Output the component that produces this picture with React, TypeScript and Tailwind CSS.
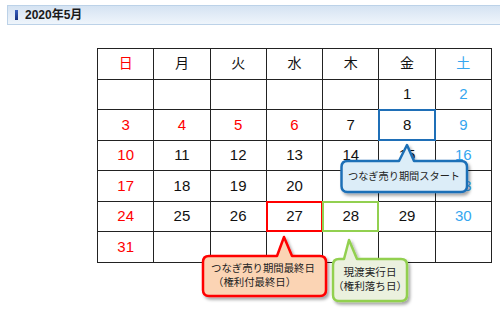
import React from 'react';

type Mark = 'blue' | 'red' | 'green';

const weeks: (number | null)[][] = [
  [null, null, null, null, null, 1, 2],
  [3, 4, 5, 6, 7, 8, 9],
  [10, 11, 12, 13, 14, 15, 16],
  [17, 18, 19, 20, 21, 22, 23],
  [24, 25, 26, 27, 28, 29, 30],
  [31, null, null, null, null, null, null],
];

const dayNames = ['日', '月', '火', '水', '木', '金', '土'];

// 祝日（GW）
const holidays = [4, 5, 6];

const marks: Record<number, Mark> = { 8: 'blue', 27: 'red', 28: 'green' };

const markClass: Record<Mark, string> = {
  blue: 'border-[#1f6fb7]',
  red: 'border-[#ff0000]',
  green: 'border-[#92d050]',
};

const dayColor = (col: number, day: number | null) => {
  if (col === 0 || (day !== null && holidays.includes(day))) return 'text-[#ff0000]';
  if (col === 6) return 'text-[#35a6ef]';
  return 'text-[#111]';
};

type Bubble = {
  x: number;
  y: number;
  w: number;
  h: number;
  baseL: number;
  baseR: number;
  tipX: number;
  tipY: number;
  stroke: string;
  fill: string;
};

const bubblePath = ({ x, y, w, h, baseL, baseR, tipX, tipY }: Bubble) => {
  const r = 6;
  const x2 = x + w;
  const y2 = y + h;
  return [
    `M${x + r},${y}`,
    `L${baseL},${y}`,
    `L${tipX},${tipY}`,
    `L${baseR},${y}`,
    `L${x2 - r},${y}`,
    `Q${x2},${y} ${x2},${y + r}`,
    `L${x2},${y2 - r}`,
    `Q${x2},${y2} ${x2 - r},${y2}`,
    `L${x + r},${y2}`,
    `Q${x},${y2} ${x},${y2 - r}`,
    `L${x},${y + r}`,
    `Q${x},${y} ${x + r},${y}`,
    'Z',
  ].join(' ');
};

const bubbles: Bubble[] = [
  { x: 341.5, y: 161, w: 125.5, h: 31, baseL: 399, baseR: 414, tipX: 407, tipY: 145, stroke: '#1f6fb7', fill: '#dcedf8' },
  { x: 203, y: 256, w: 123, h: 40, baseL: 277, baseR: 292, tipX: 284, tipY: 237, stroke: '#ff0000', fill: '#fbd4b4' },
  { x: 333, y: 259, w: 74, h: 42, baseL: 344, baseR: 357, tipX: 349, tipY: 240, stroke: '#92d050', fill: '#ebf1de' },
];

const Callouts = () => (
  <>
    <svg className="absolute inset-0 z-20 pointer-events-none" width={500} height={319}>
      <defs>
        <filter id="bubble-shadow" x="-20%" y="-20%" width="140%" height="140%">
          <feDropShadow dx="2" dy="2.5" stdDeviation="1.6" floodColor="#000" floodOpacity="0.35" />
        </filter>
      </defs>
      {bubbles.map((b, i) => (
        <path
          key={i}
          d={bubblePath(b)}
          fill={b.fill}
          stroke={b.stroke}
          strokeWidth={2.5}
          strokeLinejoin="round"
          filter="url(#bubble-shadow)"
        />
      ))}
    </svg>
    <div className="absolute z-30 left-[341px] top-[161px] w-[126px] h-[31px] flex items-center justify-center text-[10.2px] text-[#222] whitespace-nowrap">
      つなぎ売り期間スタート
    </div>
    <div className="absolute z-30 left-[211px] top-[262px] text-[10.4px] leading-[13.5px] text-[#222] whitespace-nowrap">
      <div>つなぎ売り期間最終日</div>
      <div className="pl-[2px]">（権利付最終日）</div>
    </div>
    <div className="absolute z-30 left-[333px] top-[265px] w-[74px] text-center text-[10.6px] leading-[14px] text-[#222] whitespace-nowrap">
      <div>現渡実行日</div>
      <div>（権利落ち日）</div>
    </div>
  </>
);

export default function App() {
  return (
    <div
      className="relative w-[500px] h-[319px] overflow-hidden bg-white"
      style={{ fontFamily: '"Liberation Sans", "Noto Sans CJK JP", sans-serif' }}
    >
      {/* 見出しバー */}
      <div className="ml-[7px] mt-[5px] h-[20px] flex items-center gap-[7px] pl-[7px] border border-r-0 border-[#bcd2e8] bg-gradient-to-b from-[#d5e3f2] to-[#eff5fb]">
        <span className="w-[3px] h-[10px] bg-gradient-to-b from-[#3a5fbf] to-[#14307f]" />
        <span className="text-[12px] font-bold text-[#1a1a1a] leading-none">2020年5月</span>
      </div>

      {/* カレンダー */}
      <div className="ml-[97px] mt-[23px] w-[395px] h-[215px] grid grid-cols-7 grid-rows-7 border-l border-t border-[#222]">
        {dayNames.map((name, col) => (
          <div
            key={name}
            className={`flex items-center justify-center border-r border-b border-[#222] text-[14px] ${
              col === 0 ? 'text-[#ff0000]' : col === 6 ? 'text-[#35a6ef]' : 'text-[#111]'
            }`}
          >
            {name}
          </div>
        ))}
        {weeks.flatMap((week, row) =>
          week.map((day, col) => {
            const mark = day !== null ? marks[day] : undefined;
            return (
              <div
                key={`${row}-${col}`}
                className={`relative flex items-center justify-center border-r border-b border-[#222] text-[15px] ${dayColor(col, day)}`}
              >
                {mark && <span className={`absolute -inset-px z-10 border-2 ${markClass[mark]}`} />}
                {day}
              </div>
            );
          }),
        )}
      </div>

      <Callouts />
    </div>
  );
}
